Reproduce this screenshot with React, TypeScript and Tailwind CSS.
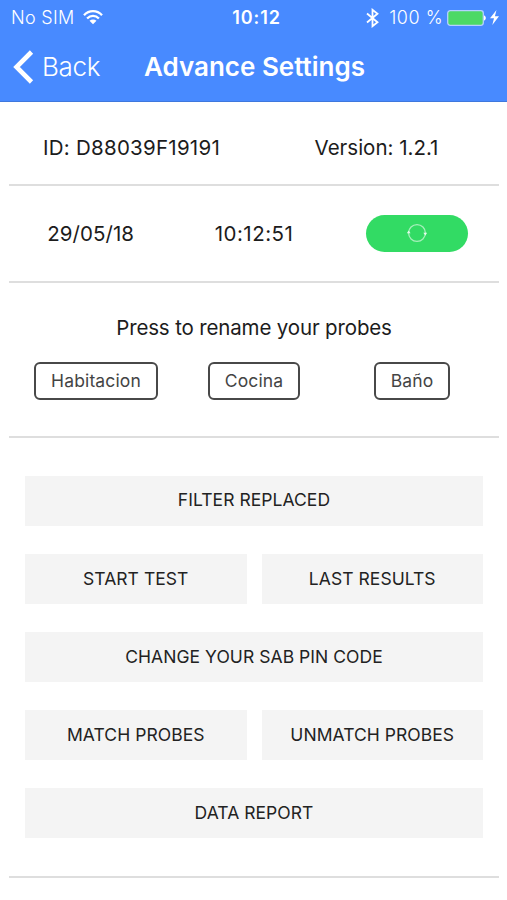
import type { ReactNode } from 'react';

const probes = ['Habitacion', 'Cocina', 'Baño'];

function StatusBar() {
  return (
    <div className="grid h-[35px] grid-cols-3 items-center text-[18px] text-white">
      <div className="flex items-center gap-2 pl-[11px]">
        <span className="text-[18px] font-light tracking-[0.3px]">No SIM</span>
        <svg className="h-[15px] w-5" viewBox="0 0 20 15" fill="none" stroke="currentColor" strokeWidth={2.3}>
          <path d="M1 5.2C6 -0.2 14 -0.2 19 5.2" />
          <path d="M4.1 8.5C7.5 4.9 12.5 4.9 15.9 8.5" />
          <path d="M10 14.2L6.5 10.8C8.5 9 11.5 9 13.5 10.8Z" fill="currentColor" stroke="none" />
        </svg>
      </div>
      <span className="pl-1.5 text-center text-[18px] font-semibold tracking-[0.9px]">10:12</span>
      <div className="flex items-center justify-end pr-2">
        <svg className="mr-[10px] h-5 w-[13px] shrink-0" viewBox="0 0 13 20" fill="none" stroke="currentColor" strokeWidth={1.8}>
          <path d="M1 5.5L11.5 14.2L6.5 18.2V1.8L11.5 5.8L1 14.5" />
        </svg>
        <span className="whitespace-nowrap text-[18px] font-light tracking-[0.5px]">100 %</span>
        <svg className="ml-1 h-4 w-[39px] shrink-0" viewBox="0 0 39 16">
          <rect x="0.7" y="0.7" width="35.6" height="14.6" rx="2.5" fill="#4cd964" stroke="#b5d0ff" strokeWidth="1.3" />
          <path d="M37 5.5C39.4 6 39.4 10 37 10.5Z" fill="#fff" />
        </svg>
        <svg className="ml-1 h-[15px] w-[9px] shrink-0" viewBox="0 0 9 15" fill="currentColor">
          <path d="M6.5 0L0 8.3H4L2.3 15L9 6.2H4.9Z" />
        </svg>
      </div>
    </div>
  );
}

function Header() {
  return (
    <header className="h-[102px] border-b border-[#3f78dd] bg-[#488aff] text-white">
      <StatusBar />
      <nav className="flex h-[63px] items-center">
        <button className="flex w-[144px] items-center pl-[13px]">
          <svg className="h-[34px] w-[21px]" viewBox="0 0 21 34" fill="none" stroke="currentColor" strokeWidth={4.6}>
            <path d="M18.5 2L3.5 17L18.5 32" />
          </svg>
          <span className="pl-2 text-[26px] font-light tracking-[-0.3px]">Back</span>
        </button>
        <h1 className="text-[26px] font-semibold">Advance Settings</h1>
      </nav>
    </header>
  );
}

function ActionButton({ children, wide }: { children: ReactNode; wide?: boolean }) {
  return (
    <button
      className={`h-[49.6px] bg-[#f4f4f4] pb-[0.4px] text-[17.5px] tracking-[0.05px] text-[#222] ${wide ? 'col-span-2' : ''}`}
    >
      {children}
    </button>
  );
}

export default function App() {
  return (
    <div className="h-[900px] w-[507px] overflow-hidden bg-white font-['Inter',sans-serif] text-[#1c1c1c]">
      <Header />
      <main className="mr-2 ml-[9px] text-[20.5px]">
        <section className="grid h-[84px] grid-cols-2 items-center border-b-2 border-[#dedede] pt-[11px] text-center">
          <span className="tracking-[0.25px]">ID: D88039F19191</span>
          <span>Version: 1.2.1</span>
        </section>

        <section className="grid h-[96.5px] grid-cols-3 items-center border-b-2 border-[#dedede] text-center">
          <span className="pt-[3px] tracking-[0.05px]">29/05/18</span>
          <span className="pt-[3px] tracking-[0.5px]">10:12:51</span>
          <button className="mx-auto flex h-[37px] w-[102px] items-center justify-center rounded-full bg-[#32db64]">
            <svg className="h-5 w-5" viewBox="0 0 20 20" fill="none" stroke="#a6efba" strokeWidth={1.3}>
              <circle cx="10" cy="10" r="8.4" />
              <path d="M-0.2 10.3L1.6 7.6L3.6 10.3ZM16.3 9.8L18.4 12.4L20.2 9.8Z" fill="#e4fbea" stroke="none" />
            </svg>
          </button>
        </section>

        <section className="h-[155px] border-b-2 border-[#dedede] px-2 pt-[30.5px]">
          <p className="text-center leading-[30px] tracking-[-0.15px]">Press to rename your probes</p>
          <div className="mt-[19px] grid grid-cols-3">
            {probes.map((probe) => (
              <div key={probe} className="flex justify-center">
                <button className="h-[38px] rounded-[6px] border-2 border-[#484848] px-[15px] text-[17.5px] tracking-[0.15px] text-[#444]">
                  {probe}
                </button>
              </div>
            ))}
          </div>
        </section>

        <section className="grid h-[440.5px] grid-cols-2 content-start gap-x-[15px] gap-y-[28.5px] border-b-2 border-[#dedede] px-4 pt-[38.5px]">
          <ActionButton wide>FILTER REPLACED</ActionButton>
          <ActionButton>START TEST</ActionButton>
          <ActionButton>LAST RESULTS</ActionButton>
          <ActionButton wide>CHANGE YOUR SAB PIN CODE</ActionButton>
          <ActionButton>MATCH PROBES</ActionButton>
          <ActionButton>UNMATCH PROBES</ActionButton>
          <ActionButton wide>DATA REPORT</ActionButton>
        </section>
      </main>
    </div>
  );
}
